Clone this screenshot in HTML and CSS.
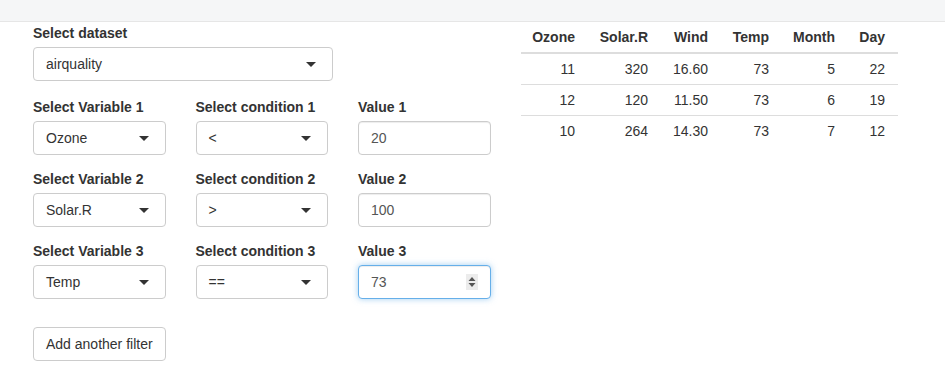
FILE: index.html
```html
<!DOCTYPE html>
<html lang="en">
<head>
<meta charset="utf-8">
<title>Filter</title>
<link rel="stylesheet" href="styles.css">
</head>
<body>
<div class="topbar"></div>
<div class="main">
  <div class="left">
    <div class="form-group dataset-group">
      <label class="control-label">Select dataset</label>
      <div class="select wide"><span class="item">airquality</span><span class="caret"></span></div>
    </div>
    <div class="filters">
      <div class="form-group">
        <label class="control-label">Select Variable 1</label>
        <div class="select"><span class="item">Ozone</span><span class="caret"></span></div>
      </div>
      <div class="form-group">
        <label class="control-label">Select condition 1</label>
        <div class="select"><span class="item">&lt;</span><span class="caret"></span></div>
      </div>
      <div class="form-group">
        <label class="control-label">Value 1</label>
        <input class="form-control" type="text" value="20">
      </div>

      <div class="form-group">
        <label class="control-label">Select Variable 2</label>
        <div class="select"><span class="item">Solar.R</span><span class="caret"></span></div>
      </div>
      <div class="form-group">
        <label class="control-label">Select condition 2</label>
        <div class="select"><span class="item">&gt;</span><span class="caret"></span></div>
      </div>
      <div class="form-group">
        <label class="control-label">Value 2</label>
        <input class="form-control" type="text" value="100">
      </div>

      <div class="form-group">
        <label class="control-label">Select Variable 3</label>
        <div class="select"><span class="item">Temp</span><span class="caret"></span></div>
      </div>
      <div class="form-group">
        <label class="control-label">Select condition 3</label>
        <div class="select"><span class="item">==</span><span class="caret"></span></div>
      </div>
      <div class="form-group">
        <label class="control-label">Value 3</label>
        <div class="form-control focused"><span>73</span>
          <svg class="spinner" width="12" height="16" viewBox="0 0 12 16" aria-hidden="true">
            <rect width="12" height="16" fill="#ececec"/>
            <polygon points="6,3 9.5,7 2.5,7" fill="#555"/>
            <polygon points="2.5,9 9.5,9 6,13" fill="#555"/>
          </svg>
        </div>
      </div>
    </div>
    <button class="btn" type="button">Add another filter</button>
  </div>
  <div class="right">
    <table class="data">
      <thead>
        <tr><th class="c1">Ozone</th><th class="c2">Solar.R</th><th class="c3">Wind</th><th class="c4">Temp</th><th class="c5">Month</th><th class="c6">Day</th></tr>
      </thead>
      <tbody>
        <tr><td>11</td><td>320</td><td>16.60</td><td>73</td><td>5</td><td class="last">22</td></tr>
        <tr><td>12</td><td>120</td><td>11.50</td><td>73</td><td>6</td><td class="last">19</td></tr>
        <tr><td>10</td><td>264</td><td>14.30</td><td>73</td><td>7</td><td class="last">12</td></tr>
      </tbody>
    </table>
  </div>
</div>
</body>
</html>
```

FILE: styles.css
```css
* { box-sizing: border-box; }
html, body {
  margin: 0;
  padding: 0;
  background: #fff;
  font-family: "Liberation Sans", Arial, Helvetica, sans-serif;
  font-size: 14px;
  line-height: 20px;
  color: #333;
}
.topbar {
  height: 22px;
  background: #f5f6f7;
  border-bottom: 1px solid #e6e6e6;
}
.main {
  display: flex;
  align-items: flex-start;
  padding-left: 33px;
  gap: 30.5px;
}
.left {
  width: 457.5px;
  padding-top: 1px;
}
.form-group {
  display: flex;
  flex-direction: column;
}
.control-label {
  display: block;
  font-weight: bold;
  height: 20px;
  margin-bottom: 4px;
}
.dataset-group { margin-bottom: 16px; }
.filters {
  display: grid;
  grid-template-columns: 132.5px 132.5px 132.5px;
  column-gap: 30px;
  row-gap: 14px;
}
.select {
  height: 34px;
  border: 1px solid #ccc;
  border-radius: 4px;
  padding: 6px 12px;
  display: flex;
  align-items: center;
  justify-content: space-between;
  background: #fff;
  color: #333;
}
.select.wide { width: 300px; }
.caret {
  width: 0;
  height: 0;
  border-left: 5px solid transparent;
  border-right: 5px solid transparent;
  border-top: 5px solid #333;
  margin-right: 4px;
}
.form-control {
  height: 34px;
  width: 100%;
  border: 1px solid #ccc;
  border-radius: 4px;
  padding: 6px 12px;
  font: inherit;
  color: #555;
  background: #fff;
  box-shadow: inset 0 1px 1px rgba(0,0,0,.075);
  outline: none;
}
.form-control.focused {
  display: flex;
  align-items: center;
  justify-content: space-between;
  border-color: #66afe9;
  box-shadow: inset 0 1px 1px rgba(0,0,0,.075), 0 0 6px rgba(102,175,233,.6);
}
.spinner { display: block; }
.btn {
  margin-top: 28px;
  height: 34px;
  padding: 6px 12px;
  font: inherit;
  color: #333;
  background: #fff;
  border: 1px solid #ccc;
  border-radius: 4px;
}
.data {
  border-collapse: separate;
  border-spacing: 0;
  width: 377px;
  table-layout: fixed;
}
.data th, .data td {
  padding: 5px 8px;
  text-align: right;
  line-height: 20px;
  white-space: nowrap;
}
.data th {
  font-weight: bold;
  border-bottom: 2px solid #ddd;
}
.data tbody tr:not(:last-child) td {
  border-bottom: 1px solid #ddd;
}
.data .c6, .data .last { padding-right: 13px; }
.c1 { width: 62px; }
.c2 { width: 73px; }
.c3 { width: 60px; }
.c4 { width: 61px; }
.c5 { width: 66px; }
.c6 { width: 55px; }
```
